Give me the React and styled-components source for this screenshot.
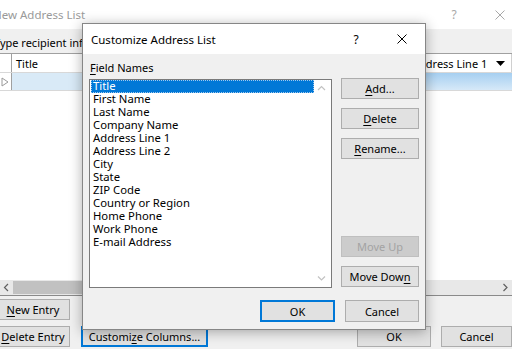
import React from "react";
import styled, { createGlobalStyle } from "styled-components";

const GlobalStyle = createGlobalStyle`
  html, body {
    margin: 0;
    padding: 0;
    background: #ffffff;
  }
  body {
    font-family: "Noto Sans", "Open Sans", sans-serif;
    font-size: 11px;
    color: #000;
    overflow: hidden;
  }
  * {
    box-sizing: border-box;
  }
`;

const FIELDS = [
  "Title",
  "First Name",
  "Last Name",
  "Company Name",
  "Address Line 1",
  "Address Line 2",
  "City",
  "State",
  "ZIP Code",
  "Country or Region",
  "Home Phone",
  "Work Phone",
  "E-mail Address",
];

const Screen = styled.div`
  position: relative;
  width: 512px;
  height: 349px;
  overflow: hidden;
  background: #fff;
`;

/* ---------- shared window chrome ---------- */

const TitleBar = styled.div`
  display: flex;
  align-items: center;
  height: ${(p) => p.$height}px;
  margin-right: ${(p) => p.$overhang || 0}px;
  background: #fff;
  flex-shrink: 0;
`;

const TitleText = styled.div`
  flex: 1;
  font-size: 11.5px;
  color: ${(p) => (p.$inactive ? "#9a9a9a" : "#000")};
  margin-left: ${(p) => p.$indent}px;
  white-space: nowrap;
`;

const CaptionButton = styled.div`
  width: 46px;
  height: 100%;
  display: flex;
  align-items: center;
  justify-content: center;
  font-size: 12px;
  color: ${(p) => (p.$inactive ? "#a8a8a8" : "#000")};
`;

const CloseGlyph = ({ color }) => (
  <svg width="10" height="10" viewBox="0 0 10 10">
    <path d="M0.5 0.5 L9.5 9.5 M9.5 0.5 L0.5 9.5" stroke={color} strokeWidth="1" />
  </svg>
);

const Key = styled.span`
  text-decoration: underline;
  text-underline-offset: 2px;
`;

const Button = styled.div`
  width: ${(p) => p.$width}px;
  height: ${(p) => p.$height || 21}px;
  flex-shrink: 0;
  display: flex;
  align-items: center;
  justify-content: center;
  white-space: nowrap;
  font-size: 11px;
  background: ${(p) => (p.$disabled ? "#cccccc" : "#e1e1e1")};
  color: ${(p) => (p.$disabled ? "#a3a3a3" : "#000")};
  border: 1px solid
    ${(p) => (p.$default ? "#0078d7" : p.$disabled ? "#bfbfbf" : "#adadad")};
  box-shadow: ${(p) => (p.$default ? "inset 0 0 0 1px #0078d7" : "none")};
  margin-left: ${(p) => p.$ml || 0}px;
`;

/* ---------- background window: New Address List ---------- */

const BgWindow = styled.div`
  display: flex;
  flex-direction: column;
  height: 349px;
  width: 516px;
  margin-left: -4px;
`;

const BgBody = styled.div`
  flex: 1;
  display: flex;
  flex-direction: column;
  background: #f0f0f0;
`;

const Instruction = styled.div`
  padding-top: 6px;
  margin-left: -2px;
  line-height: 16px;
  height: 22px;
  white-space: nowrap;
`;

const Table = styled.div`
  margin: 2px 0 0 3px;
  height: 243px;
  display: flex;
  flex-direction: column;
  background: #fff;
  border-top: 1px solid #a0a0a0;
  border-bottom: 1px solid #8a8a8a;
`;

const TableRow = styled.div`
  display: flex;
  height: ${(p) => p.$height}px;
  flex-shrink: 0;
  background: ${(p) => p.$bg};
  border-bottom: 1px solid #d8d8d8;
`;

const RowHeadCell = styled.div`
  width: 13px;
  display: flex;
  align-items: center;
  justify-content: center;
  border-right: 1px solid #a0a0a0;
  background: ${(p) => p.$bg || "#fff"};
`;

const HeadCell = styled.div`
  flex: ${(p) => (p.$fill ? 1 : "none")};
  width: ${(p) => p.$width || 0}px;
  display: flex;
  align-items: center;
  padding-left: 4px;
  padding-right: 6px;
  white-space: nowrap;
  border-right: 1px solid #d0d0d0;
`;

const HeadArrow = styled.div`
  margin-left: auto;
  display: flex;
  align-items: center;
`;

const DataCell = styled.div`
  flex: ${(p) => (p.$fill ? 1 : "none")};
  width: ${(p) => p.$width || 0}px;
  background: ${(p) => p.$bg || "transparent"};
`;

const TableBody = styled.div`
  flex: 1;
  background: #fff;
`;

const HScroll = styled.div`
  height: 15px;
  display: flex;
  align-items: stretch;
  background: #e8e8e8;
`;

const ScrollArrow = styled.div`
  width: ${(p) => p.$width}px;
  display: flex;
  align-items: center;
  justify-content: center;
`;

const Thumb = styled.div`
  width: ${(p) => p.$width}px;
  margin: 1px 0;
  background: #c1c1c1;
`;

const ButtonRow = styled.div`
  display: flex;
  align-items: center;
  margin-top: ${(p) => p.$mt}px;
`;

const Spacer = styled.div`
  flex: 1;
`;

/* ---------- foreground dialog: Customize Address List ---------- */

const Dialog = styled.div`
  position: absolute;
  left: 82px;
  top: 23px;
  width: 344px;
  height: 307px;
  display: flex;
  flex-direction: column;
  border: 1px solid #868686;
  box-shadow: 0 2px 12px rgba(0, 0, 0, 0.32);
  background: #f0f0f0;
`;

const DialogBody = styled.div`
  flex: 1;
  display: flex;
  flex-direction: column;
  padding: 6px 6px 7px 6px;
`;

const MainArea = styled.div`
  display: flex;
  gap: 9px;
`;

const ListColumn = styled.div`
  display: flex;
  flex-direction: column;
`;

const FieldLabel = styled.div`
  height: 19px;
  line-height: 15px;
  padding-left: 1px;
`;

const ListBox = styled.div`
  width: 243px;
  height: 209px;
  display: flex;
  background: #fff;
  border: 1px solid #7a7a7a;
`;

const ListItems = styled.div`
  flex: 1;
  padding: 0 0 0 1px;
`;

const ListItem = styled.div`
  height: 13px;
  line-height: 12px;
  padding-left: 2px;
  white-space: nowrap;
  font-size: 11.3px;
  background: ${(p) => (p.$selected ? "#0078d7" : "transparent")};
  color: ${(p) => (p.$selected ? "#fff" : "#000")};
  outline: ${(p) => (p.$selected ? "1px dotted #9fc9ef" : "none")};
  outline-offset: -1px;
`;

const VScroll = styled.div`
  width: 17px;
  display: flex;
  flex-direction: column;
  justify-content: space-between;
  align-items: center;
  padding: 5px 2px 5px 0;
`;

const SideButtons = styled.div`
  display: flex;
  flex-direction: column;
  gap: 9px;
  padding-top: 18px;
  height: 227px;
`;

const SideGap = styled.div`
  flex: 1;
`;

const Footer = styled.div`
  display: flex;
  justify-content: flex-end;
  gap: 10px;
  margin-top: 12px;
`;

const Chevron = ({ dir, color = "#c2c2c2" }) => {
  const paths = {
    up: "M1 5 L4.5 1.5 L8 5",
    down: "M1 1.5 L4.5 5 L8 1.5",
    left: "M5 1 L1.5 4.5 L5 8",
    right: "M1.5 1 L5 4.5 L1.5 8",
  };
  const vertical = dir === "up" || dir === "down";
  return (
    <svg width={vertical ? 9 : 7} height={vertical ? 7 : 9} viewBox={vertical ? "0 0 9 7" : "0 0 7 9"}>
      <path d={paths[dir]} fill="none" stroke={color} strokeWidth="1.2" />
    </svg>
  );
};

const RowPointer = () => (
  <svg width="8" height="10" viewBox="0 0 8 10">
    <path d="M1 1 L7 5 L1 9 Z" fill="#fff" stroke="#9a9a9a" strokeWidth="1" />
  </svg>
);

const DropArrow = () => (
  <svg width="9" height="5" viewBox="0 0 9 5">
    <path d="M0 0 L9 0 L4.5 5 Z" fill="#000" />
  </svg>
);

function BackgroundWindow() {
  return (
    <BgWindow>
      <TitleBar $height={29} $overhang={-11}>
        <TitleText $inactive $indent={-3}>New Address List</TitleText>
        <CaptionButton $inactive>?</CaptionButton>
        <CaptionButton $inactive>
          <CloseGlyph color="#a8a8a8" />
        </CaptionButton>
      </TitleBar>
      <BgBody>
        <Instruction>
          Type recipient information in the table. To add more entries, click New Entry.
        </Instruction>
        <Table>
          <TableRow $height={19} $bg="#fff">
            <RowHeadCell />
            <HeadCell $fill>Title</HeadCell>
            <HeadCell $width={104}>
              Address Line 1
              <HeadArrow>
                <DropArrow />
              </HeadArrow>
            </HeadCell>
          </TableRow>
          <TableRow $height={18} $bg="#d9eaf7">
            <RowHeadCell $bg="#fff">
              <RowPointer />
            </RowHeadCell>
            <DataCell $fill />
            <DataCell
              $width={104}
              $bg="linear-gradient(#a6cff1, #d6e9f8)"
            />
          </TableRow>
          <TableBody />
          <HScroll>
            <ScrollArrow $width={14}>
              <Chevron dir="left" color="#606060" />
            </ScrollArrow>
            <Thumb $width={300} />
            <Spacer />
            <ScrollArrow $width={14}>
              <Chevron dir="right" color="#606060" />
            </ScrollArrow>
          </HScroll>
        </Table>
        <ButtonRow $mt={3}>
          <Button $width={74}>
            <Key>N</Key>ew Entry
          </Button>
        </ButtonRow>
        <ButtonRow $mt={6}>
          <Button $width={74}>
            <Key>D</Key>elete Entry
          </Button>
          <Button $width={127} $ml={11} $default>
            Customi<Key>z</Key>e Columns...
          </Button>
          <Spacer />
          <Button $width={74}>OK</Button>
          <Button $width={71} $ml={10}>
            Cancel
          </Button>
        </ButtonRow>
      </BgBody>
    </BgWindow>
  );
}

function CustomizeDialog() {
  return (
    <Dialog>
      <TitleBar $height={30}>
        <TitleText $indent={8}>Customize Address List</TitleText>
        <CaptionButton>?</CaptionButton>
        <CaptionButton>
          <CloseGlyph color="#000" />
        </CaptionButton>
      </TitleBar>
      <DialogBody>
        <MainArea>
          <ListColumn>
            <FieldLabel>
              <Key>F</Key>ield Names
            </FieldLabel>
            <ListBox>
              <ListItems>
                {FIELDS.map((name, i) => (
                  <ListItem key={name} $selected={i === 0}>
                    {name}
                  </ListItem>
                ))}
              </ListItems>
              <VScroll>
                <Chevron dir="up" />
                <Chevron dir="down" />
              </VScroll>
            </ListBox>
          </ListColumn>
          <SideButtons>
            <Button $width={78}>
              <Key>A</Key>dd...
            </Button>
            <Button $width={78}>
              <Key>D</Key>elete
            </Button>
            <Button $width={78}>
              <Key>R</Key>ename...
            </Button>
            <SideGap />
            <Button $width={78} $disabled>
              Move Up
            </Button>
            <Button $width={78}>
              Move Dow<Key>n</Key>
            </Button>
          </SideButtons>
        </MainArea>
        <Footer>
          <Button $width={75} $height={22} $default>
            OK
          </Button>
          <Button $width={74} $height={22}>
            Cancel
          </Button>
        </Footer>
      </DialogBody>
    </Dialog>
  );
}

export default function App() {
  return (
    <Screen>
      <GlobalStyle />
      <BackgroundWindow />
      <CustomizeDialog />
    </Screen>
  );
}
